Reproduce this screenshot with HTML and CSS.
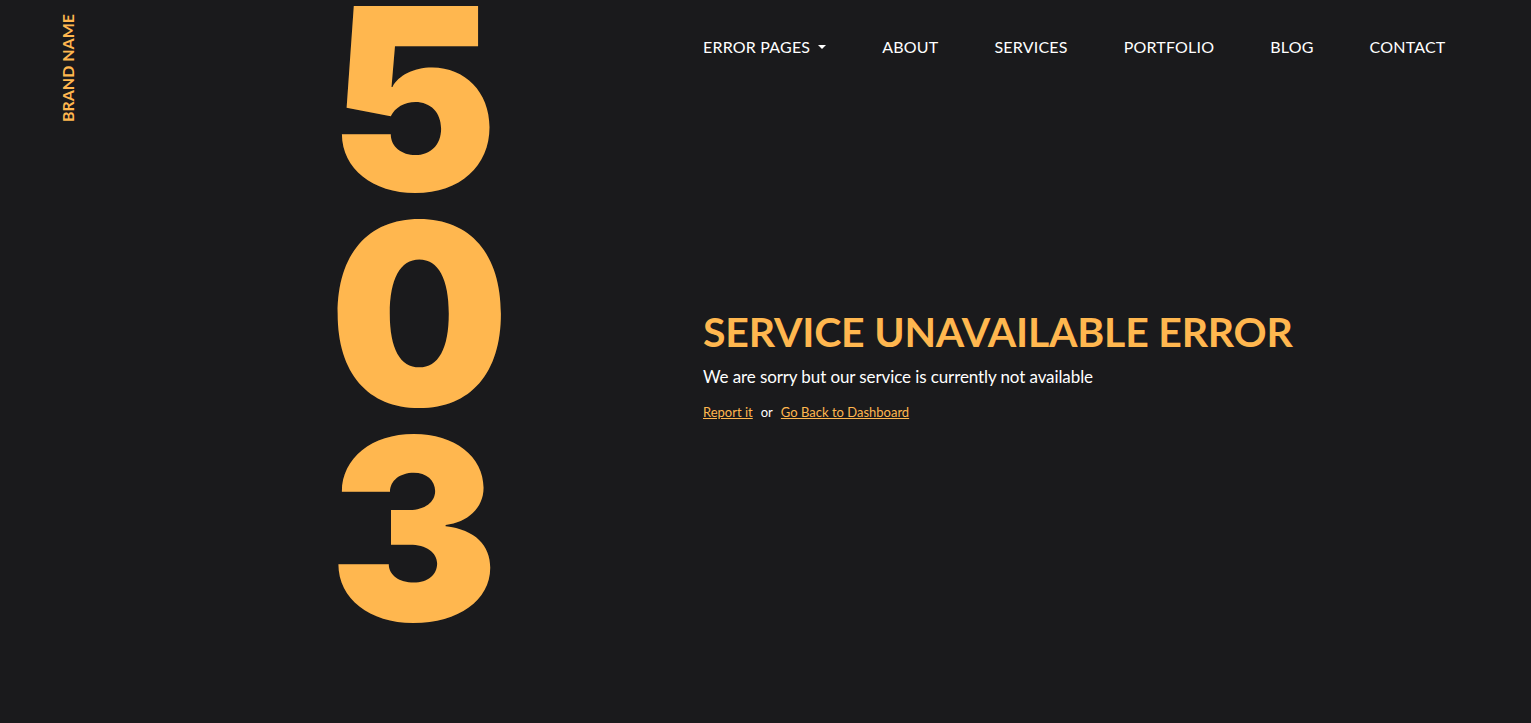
FILE: index.html
```html
<!DOCTYPE html>
<html lang="en">
<head>
<meta charset="utf-8">
<title>503 Service Unavailable</title>
<link rel="stylesheet" href="styles.css">
</head>
<body>
<div class="page">
  <aside class="sidebar">
    <a class="brand" href="#">BRAND NAME</a>
  </aside>
  <div class="code-col">
    <div class="code">
      <span class="digit">5</span>
      <span class="digit">0</span>
      <span class="digit">3</span>
    </div>
  </div>
  <div class="main-col">
    <nav class="nav">
      <a href="#" class="nav-link">ERROR PAGES <span class="caret"></span></a>
      <a href="#" class="nav-link">ABOUT</a>
      <a href="#" class="nav-link">SERVICES</a>
      <a href="#" class="nav-link">PORTFOLIO</a>
      <a href="#" class="nav-link">BLOG</a>
      <a href="#" class="nav-link">CONTACT</a>
    </nav>
    <section class="message">
      <h1 class="title">SERVICE UNAVAILABLE ERROR</h1>
      <p class="lead">We are sorry but our service is currently not available</p>
      <p class="links"><a href="#">Report it</a><span class="or">or</span><a href="#">Go Back to Dashboard</a></p>
    </section>
  </div>
</div>
</body>
</html>
```
FILE: styles.css
```css
* { box-sizing: border-box; }
html, body { margin: 0; padding: 0; }
body {
  background: #1a1a1c;
  color: #ffffff;
  font-family: "Lato", "Open Sans", sans-serif;
  height: 723px;
  overflow: hidden;
}
.page {
  display: flex;
  height: 723px;
}
.sidebar {
  width: 100px;
  flex: none;
  padding-left: 60px;
  padding-top: 14px;
}
.brand {
  display: block;
  writing-mode: vertical-rl;
  transform: rotate(180deg);
  color: #ffb74f;
  font-weight: 700;
  font-size: 16px;
  text-decoration: none;
  line-height: 16px;
}
.code-col {
  width: 603px;
  flex: none;
  padding-left: 229px;
}
.code {
  display: flex;
  flex-direction: column;
  font-family: "Inter", sans-serif;
  font-weight: 900;
  color: #ffb74f;
  font-size: 254px;
  line-height: 215px;
  margin-top: -9px;
}
.digit { display: block; }
.main-col {
  flex: 1;
  display: flex;
  flex-direction: column;
}
.nav {
  display: flex;
  gap: 56px;
  padding-top: 37px;
  height: 94px;
  align-items: flex-start;
}
.nav-link {
  color: #ffffff;
  text-decoration: none;
  font-size: 16px;
  letter-spacing: 0.2px;
  line-height: 20px;
  display: flex;
  align-items: center;
}
.caret {
  display: inline-block;
  width: 0;
  height: 0;
  margin-left: 8px;
  border-left: 4.5px solid transparent;
  border-right: 4.5px solid transparent;
  border-top: 4.5px solid #ffffff;
}
.message {
  padding-top: 214px;
}
.title {
  margin: 0;
  color: #ffb74f;
  font-size: 41px;
  font-weight: 700;
  letter-spacing: -0.2px;
  line-height: 48px;
}
.lead {
  margin: 10px 0 0;
  font-size: 17px;
  letter-spacing: -0.1px;
  line-height: 22px;
}
.links {
  margin: 15px 0 0;
  font-size: 13px;
  line-height: 18px;
}
.links a { color: #ffb74f; }
.or { margin: 0 8px; }
```
